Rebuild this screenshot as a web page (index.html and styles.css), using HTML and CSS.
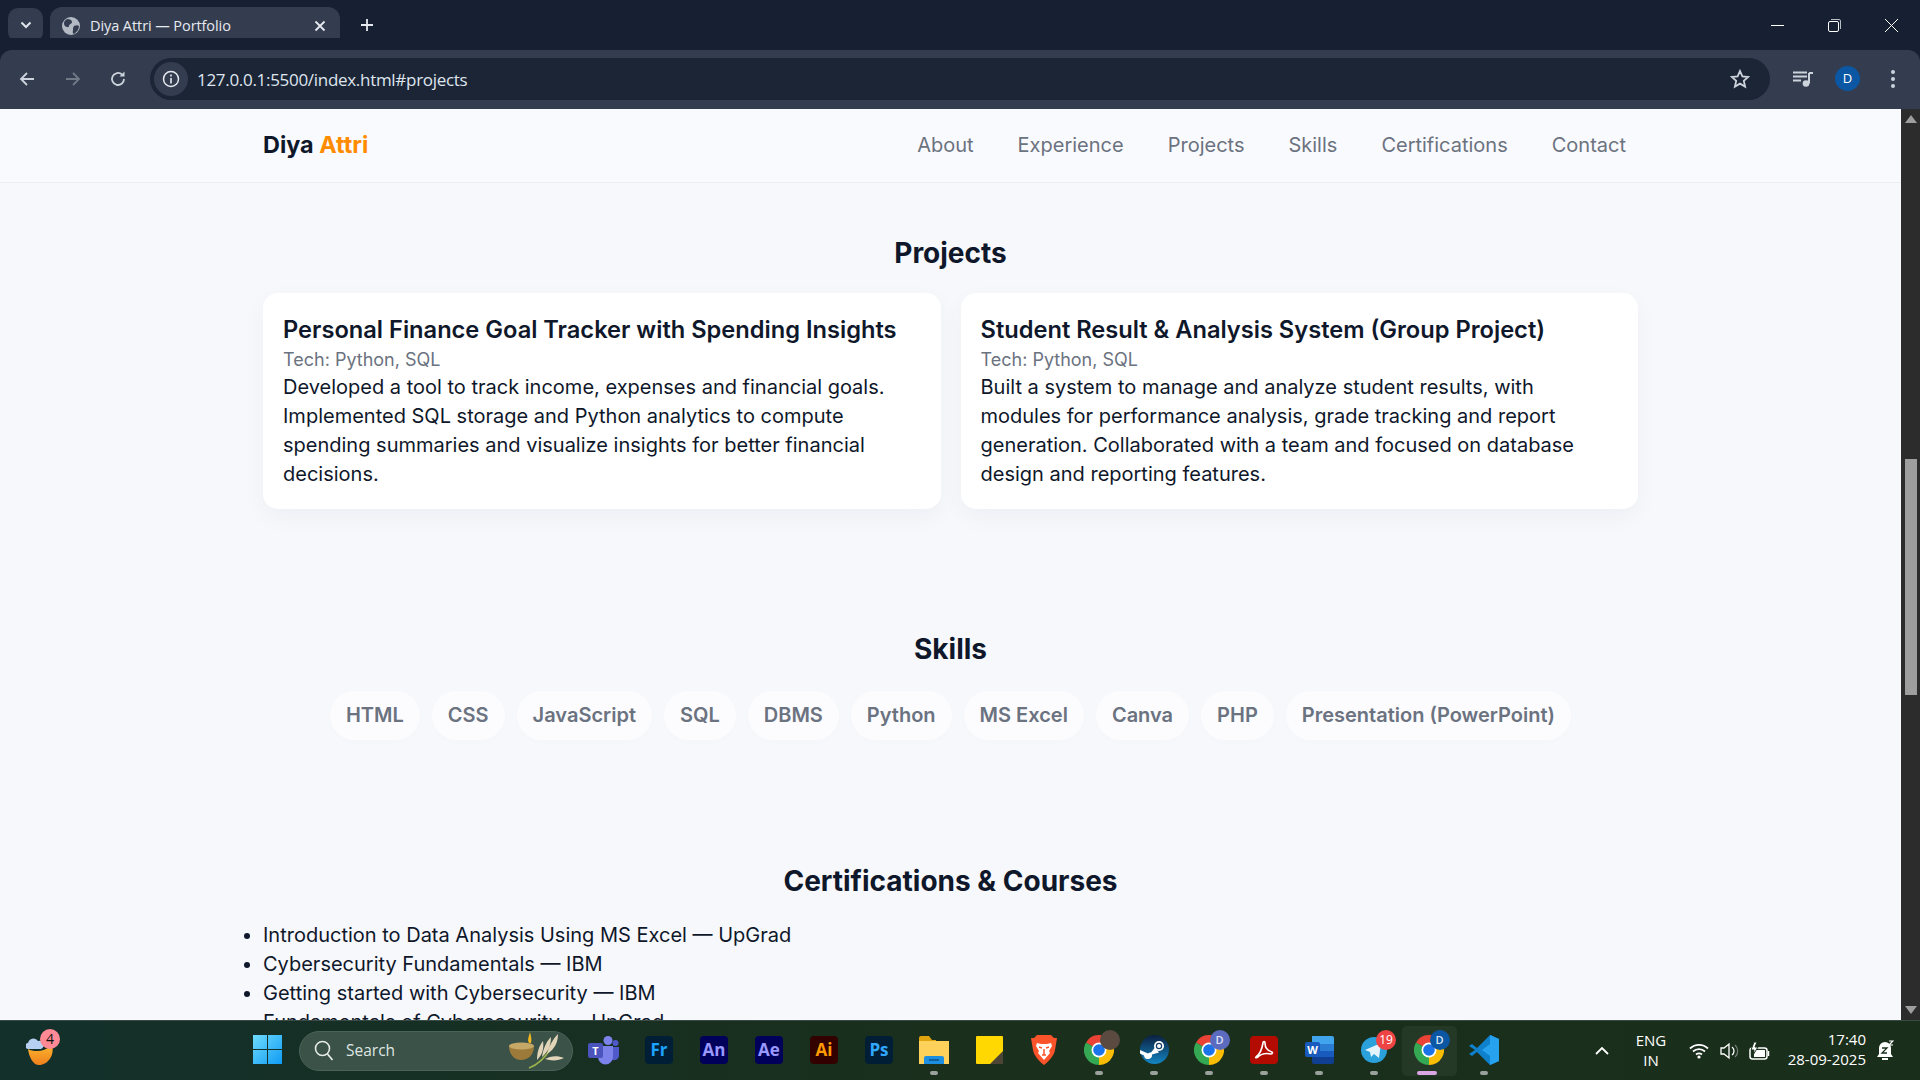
FILE: index.html
```html
<!DOCTYPE html>
<html lang="en">
<head>
    <meta charset="UTF-8">
    <meta name="viewport" content="width=device-width, initial-scale=1.0">
    <title>Diya Attri — Portfolio</title>
    <link rel="stylesheet" href="styles.css">
</head>
<body>
    <div class="tabbar">
        <div class="tab-search">
            <svg width="12" height="8" viewBox="0 0 12 8"><path d="M1.5 1.5 6 6l4.5-4.5" fill="none" stroke="#dfe3ea" stroke-width="2"/></svg>
        </div>
        <div class="tab">
            <svg class="favicon" width="18" height="18" viewBox="0 0 18 18"><circle cx="9" cy="9" r="9" fill="#b4bac4"/><path d="M5 2c3 0 5 1 5 3S7 7 7 9s-3 1-4 0-1-2-1-3 1-3 3-4zM12 9c2-1 4-1 5 0 0 3-2 6-5 8-2-1-1-3-1-4s0-3 1-4z" fill="#343d4f"/></svg>
            <span class="tab-title">Diya Attri — Portfolio</span>
            <svg class="tab-close" width="12" height="12" viewBox="0 0 12 12"><path d="M1.5 1.5l9 9M10.5 1.5l-9 9" stroke="#e6e9ef" stroke-width="1.8"/></svg>
        </div>
        <svg class="new-tab" width="14" height="14" viewBox="0 0 14 14"><path d="M7 1v12M1 7h12" stroke="#e6e9ef" stroke-width="1.8"/></svg>
        <div class="win-controls">
            <svg width="13" height="13" viewBox="0 0 13 13"><path d="M0 6.5h13" stroke="#fff"/></svg>
            <svg width="13" height="13" viewBox="0 0 13 13"><rect x=".5" y="2.5" width="10" height="10" rx="1.5" fill="none" stroke="#fff"/><path d="M3 .5h8a1.500 1.500 0 0 1 1.500 1.500v8" fill="none" stroke="#b9bdc6"/></svg>
            <svg width="13" height="13" viewBox="0 0 13 13"><path d="M0 0l13 13M13 0 0 13" stroke="#fff"/></svg>
        </div>
    </div>

    <div class="toolbar">
        <svg class="tool-btn" width="18" height="18" viewBox="0 0 18 18"><path d="M16 9H3M9 3 3 9l6 6" fill="none" stroke="#cdd3dc" stroke-width="1.800"/></svg>
        <svg class="tool-btn" width="18" height="18" viewBox="0 0 18 18"><path d="M2 9h13M9 3l6 6-6 6" fill="none" stroke="#717987" stroke-width="1.800"/></svg>
        <svg class="tool-btn" width="18" height="18" viewBox="0 0 18 18"><path d="M15 9a6 6 0 1 1-2-4.500" fill="none" stroke="#cdd3dc" stroke-width="1.800"/><path d="M15.500 1.500v5h-5z" fill="#cdd3dc"/></svg>
        <div class="address">
            <span class="site-info">
                <svg width="18" height="18" viewBox="0 0 18 18"><circle cx="9" cy="9" r="7.500" fill="none" stroke="#e6e9ef" stroke-width="1.500"/><path d="M9 8v5.500M9 4.500v2" stroke="#e6e9ef" stroke-width="1.600"/></svg>
            </span>
            <span class="url">127.0.0.1:5500/index.html#projects</span>
            <svg class="star" width="20" height="20" viewBox="0 0 20 20"><path d="M10 2l2.400 5.400 5.800.6-4.400 3.900 1.300 5.700L10 14.600l-5.100 3 1.300-5.700L1.800 8l5.800-.6z" fill="none" stroke="#cdd3dc" stroke-width="1.800"/></svg>
        </div>
        <svg class="media" width="21" height="16" viewBox="0 0 21 16"><path d="M0 1.500h14M0 5.500h14M0 9.500h8" stroke="#cdd3dc" stroke-width="1.800"/><path d="M16 2v10.500" stroke="#cdd3dc" stroke-width="2"/><path d="M16 1h4v2h-4z" fill="#cdd3dc"/><circle cx="13" cy="12.500" r="3.300" fill="#cdd3dc"/></svg>
        <span class="avatar">D</span>
        <svg class="kebab" width="4" height="18" viewBox="0 0 4 18"><circle cx="2" cy="2" r="2" fill="#cdd3dc"/><circle cx="2" cy="9" r="2" fill="#cdd3dc"/><circle cx="2" cy="16" r="2" fill="#cdd3dc"/></svg>
    </div>

    <div class="viewport">
        <div class="page">
            <nav class="nav">
                <div class="logo">Diya <span class="accent">Attri</span></div>
                <div class="nav-links">
                    <a href="#about">About</a>
                    <a href="#experience">Experience</a>
                    <a href="#projects">Projects</a>
                    <a href="#skills">Skills</a>
                    <a href="#certs">Certifications</a>
                    <a href="#contact">Contact</a>
                </div>
            </nav>

            <section class="section projects" id="projects">
                <h2>Projects</h2>
                <div class="cards">
                    <article class="card">
                        <h3>Personal Finance Goal Tracker with Spending Insights</h3>
                        <div class="tech">Tech: Python, SQL</div>
                        <p>Developed a tool to track income, expenses and financial goals. Implemented SQL storage and Python analytics to compute spending summaries and visualize insights for better financial decisions.</p>
                    </article>
                    <article class="card">
                        <h3>Student Result &amp; Analysis System (Group Project)</h3>
                        <div class="tech">Tech: Python, SQL</div>
                        <p>Built a system to manage and analyze student results, with modules for performance analysis, grade tracking and report generation. Collaborated with a team and focused on database design and reporting features.</p>
                    </article>
                </div>
            </section>

            <section class="section skills" id="skills">
                <h2>Skills</h2>
                <div class="pills">
                    <span class="pill">HTML</span>
                    <span class="pill">CSS</span>
                    <span class="pill">JavaScript</span>
                    <span class="pill">SQL</span>
                    <span class="pill">DBMS</span>
                    <span class="pill">Python</span>
                    <span class="pill">MS Excel</span>
                    <span class="pill">Canva</span>
                    <span class="pill">PHP</span>
                    <span class="pill">Presentation (PowerPoint)</span>
                </div>
            </section>

            <section class="section certs" id="certs">
                <h2>Certifications &amp; Courses</h2>
                <ul>
                    <li>Introduction to Data Analysis Using MS Excel — UpGrad</li>
                    <li>Cybersecurity Fundamentals — IBM</li>
                    <li>Getting started with Cybersecurity — IBM</li>
                    <li>Fundamentals of Cybersecurity — UpGrad</li>
                </ul>
            </section>
        </div>
        <div class="scrollbar">
            <span class="arrow-up"></span>
            <div class="track"><div class="thumb"></div></div>
            <span class="arrow-down"></span>
        </div>
    </div>

    <div class="taskbar">
        <div class="weather">
            <svg width="29" height="28" viewBox="0 0 29 28"><defs><linearGradient id="moon" x1="0" y1="0" x2="0" y2="1"><stop offset="0" stop-color="#fbb62e"/><stop offset="1" stop-color="#ee7f1c"/></linearGradient></defs><path d="M2 12c7 4 18 2 24-4 3 10-4 20-13 20C7 28 3 20 2 12z" fill="url(#moon)"/><path d="M3 12a3 3 0 0 1-1-6 5.500 5.500 0 0 1 10-2 4 4 0 0 1 3 8z" fill="#b5d0f0"/></svg>
            <span class="weather-badge">4</span>
        </div>

        <div class="center-icons">
            <div class="slot">
                <svg width="29" height="29" viewBox="0 0 29 29"><defs><linearGradient id="winblue" x1="0" y1="0" x2="1" y2="1"><stop offset="0" stop-color="#6fdcfb"/><stop offset="1" stop-color="#0f9bf5"/></linearGradient></defs><path d="M0 0h14v14H0zM15 0h14v14H15zM0 15h14v14H0zM15 15h14v14H15z" fill="url(#winblue)"/></svg>
            </div>
            <div class="search">
                <svg width="20" height="22" viewBox="0 0 20 22"><circle cx="8.500" cy="8.500" r="7" fill="none" stroke="#e6ebe8" stroke-width="1.600"/><path d="M13.500 14l5 6" stroke="#e6ebe8" stroke-width="1.800"/></svg>
                <span class="search-label">Search</span>
                <svg class="diya" width="58" height="38" viewBox="0 0 58 38"><path d="M22 36c8-3 16-10 22-20" fill="none" stroke="#9db34a" stroke-width="1.500"/><path d="M30 28c0-8 2-14 6-19 1 7 0 13-6 19zM35 25c1-8 4-15 9-20 0 7-2 14-9 20zM40 22c2-8 6-15 11-20 0 8-3 15-11 20zM38 27c5-3 12-4 19-1-6 3-13 3-19 1z" fill="#e2d4b8"/><path d="M2 14c6-3 20-3 25 0 0 9-6 14-13 14S2 22 2 14z" fill="#9c7b3a"/><ellipse cx="14.500" cy="14" rx="12.500" ry="3.500" fill="#c5a868"/><path d="M22 11c-2-3 0-7 1-11 1 4 2 8 1 11z" fill="#f4b81c"/></svg>
            </div>
            <div class="slot">
                <svg width="32" height="30" viewBox="0 0 32 30"><circle cx="20" cy="5.500" r="4.500" fill="#7b83eb"/><circle cx="27.500" cy="8" r="3" fill="#5059c9"/><path d="M22 12h9v9a5 5 0 0 1-9 2z" fill="#5059c9"/><path d="M10 11h15v11a7 7 0 0 1-15 0z" fill="#7b83eb"/><rect y="8" width="15" height="15" rx="2" fill="#4b53bc"/><text x="7.500" y="20" class="tile-small">T</text></svg>
            </div>
            <div class="slot"><span class="tile tile-fr">Fr</span></div>
            <div class="slot"><span class="tile tile-an">An</span></div>
            <div class="slot"><span class="tile tile-ae">Ae</span></div>
            <div class="slot"><span class="tile tile-ai">Ai</span></div>
            <div class="slot"><span class="tile tile-ps">Ps</span></div>
            <div class="slot running">
                <svg width="30" height="28" viewBox="0 0 30 28"><path d="M0 2a2 2 0 0 1 2-2h8l3 4h4v4H0z" fill="#e0a50e"/><path d="M0 5h30v23H0z" fill="#fdd15a"/><path d="M5 22a2 2 0 0 1 2-2h16a2 2 0 0 1 2 2v6H5z" fill="#1d8fe0"/><path d="M10 24h10" stroke="#0d4f8a" stroke-width="1.500"/></svg>
            </div>
            <div class="slot">
                <svg width="27" height="28" viewBox="0 0 27 28"><path d="M1 0h25a1 1 0 0 1 1 1v27H1a1 1 0 0 1-1-1V1a1 1 0 0 1 1-1z" fill="#fed800"/><path d="M27 15v13H14z" fill="#4c4536"/></svg>
            </div>
            <div class="slot">
                <svg width="26" height="30" viewBox="0 0 26 30"><path d="M6 0h14l3 3h3l-2 12c-1 6-7 12-11 15C9 27 3 21 2 15L0 3h3z" fill="#fb542b"/><path d="M6 8l4 1h6l4-1 1 3-3 5 1 2-6 7-6-7 1-2-3-5z" fill="#fff"/><path d="M8 12l3 1M18 12l-3 1M11 20h4M13 14v6" stroke="#fb542b" stroke-width="1.500"/></svg>
            </div>
            <div class="slot running">
                <svg class="chrome" width="30" height="30" viewBox="0 0 30 30"><use href="#chrome-art"/></svg>
                <span class="profile-badge badge-photo"></span>
            </div>
            <div class="slot running">
                <svg width="29" height="29" viewBox="0 0 29 29"><defs><linearGradient id="steamblue" x1="0" y1="0" x2="0" y2="1"><stop offset="0" stop-color="#0c1f3f"/><stop offset="1" stop-color="#1386c2"/></linearGradient></defs><circle cx="14.500" cy="14.500" r="14.500" fill="url(#steamblue)"/><circle cx="19" cy="11" r="5" fill="#fff"/><circle cx="19" cy="11" r="3.200" fill="#123a66"/><circle cx="19" cy="11" r="2" fill="#fff"/><path d="M0 15l8 3.500a4 4 0 0 1 3-1l4-5 4 5-7 2a4 4 0 0 1-8 1l-4-2z" fill="#fff"/></svg>
            </div>
            <div class="slot running">
                <svg class="chrome" width="30" height="30" viewBox="0 0 30 30"><use href="#chrome-art"/></svg>
                <span class="profile-badge badge-purple">D</span>
            </div>
            <div class="slot running">
                <span class="tile tile-pdf"><svg width="20" height="20" viewBox="0 0 20 20"><path d="M2 17c3-2 6-8 7-14 0-2 2-2 2 0 0 5 3 8 7 9 1 1 0 2-1 2-5-1-10 0-13 3-1 1-3 1-2 0z" fill="none" stroke="#fff" stroke-width="1.600"/></svg></span>
            </div>
            <div class="slot running">
                <svg width="29" height="28" viewBox="0 0 29 28"><path d="M7 0h20a2 2 0 0 1 2 2v6H7z" fill="#41a5ee"/><path d="M7 8h22v7H7z" fill="#2b7cd3"/><path d="M7 15h22v6H7z" fill="#185abd"/><path d="M7 21h22v5a2 2 0 0 1-2 2H9a2 2 0 0 1-2-2z" fill="#103f91"/><rect y="6" width="15" height="15" rx="2" fill="#185abd"/><text x="7.500" y="18" class="tile-small">W</text></svg>
            </div>
            <div class="slot running">
                <svg width="26" height="26" viewBox="0 0 26 26"><circle cx="13" cy="13" r="13" fill="#2aa1da"/><path d="M4 13l16-7-2 15-5-4-3 3-1-5z" fill="#e3f3fb"/></svg>
                <span class="count-badge">19</span>
            </div>
            <div class="slot running active">
                <svg class="chrome" width="30" height="30" viewBox="0 0 30 30"><use href="#chrome-art"/></svg>
                <span class="profile-badge badge-blue">D</span>
            </div>
            <div class="slot running">
                <svg width="30" height="30" viewBox="0 0 30 30"><path d="M21 0l9 4v22l-9 4L8 17l-5 4-3-2 6-4-6-4 3-2 5 4z" fill="#0e80cc"/><path d="M21 0l9 4v22l-9 4V21l-8-6 8-6z" fill="#27a2ef"/></svg>
            </div>
        </div>

        <div class="tray">
            <svg class="tray-up" width="14" height="9" viewBox="0 0 14 9"><path d="M1 8l6-6 6 6" fill="none" stroke="#fff" stroke-width="1.800"/></svg>
            <div class="lang">ENG<br>IN</div>
            <svg class="tray-icon" width="20" height="16" viewBox="0 0 20 16"><path d="M1 5.500a13 13 0 0 1 18 0M4 8.500a9 9 0 0 1 12 0M7 11.500a5 5 0 0 1 6 0" fill="none" stroke="#fff" stroke-width="1.800"/><circle cx="10" cy="14" r="1.600" fill="#fff"/></svg>
            <svg class="tray-icon" width="20" height="18" viewBox="0 0 20 18"><path d="M1 6h3l5-4v14l-5-4H1z" fill="none" stroke="#fff" stroke-width="1.300"/><path d="M12 5a5 5 0 0 1 0 8" fill="none" stroke="#fff" stroke-width="1.300"/><path d="M15 3a8 8 0 0 1 0 12" fill="none" stroke="#77807a" stroke-width="1.200"/></svg>
            <svg class="tray-icon battery" width="21" height="18" viewBox="0 0 21 18"><rect x="1" y="6" width="17" height="11" rx="2.500" fill="none" stroke="#fff" stroke-width="1.500"/><rect x="5" y="8" width="11" height="7" fill="#fff"/><path d="M19.500 9v5" stroke="#fff" stroke-width="1.500"/><path d="M5 0 2 8h3l-1 5 5-8H6l2-5z" fill="#fff" stroke="#1a2f1c"/></svg>
            <div class="clock">17:40<br>28-09-2025</div>
            <svg class="bell" width="18" height="22" viewBox="0 0 18 22"><path d="M9 2a6 6 0 0 0-6 6v6l-2 3h16l-2-3V8a6 6 0 0 0-6-6z" fill="#fff"/><path d="M6 19h6" stroke="#fff" stroke-width="2"/><path d="M6 8h5l-5 5h5" fill="none" stroke="#1a2f1c" stroke-width="1.300"/><path d="M13 1h4l-4 4h4" fill="none" stroke="#fff" stroke-width="1.200"/></svg>
        </div>
    </div>

    <svg class="sprite" width="0" height="0">
        <symbol id="chrome-art" viewBox="0 0 30 30">
            <path d="M15 15 2 7.500A15 15 0 0 1 28 7.500z" fill="#ea4335"/>
            <path d="M15 15 15 30A15 15 0 0 1 2 7.500z" fill="#34a853"/>
            <path d="M15 15 28 7.500A15 15 0 0 1 15 30z" fill="#fbbc04"/>
            <circle cx="15" cy="15" r="7.500" fill="#fff"/>
            <circle cx="15" cy="15" r="5.800" fill="#1a73e8"/>
        </symbol>
    </svg>
</body>
</html>
```

FILE: styles.css
```css
* {
    margin: 0;
    padding: 0;
    box-sizing: border-box;
}

html, body {
    height: 100%;
    overflow: hidden;
}

body {
    display: flex;
    flex-direction: column;
    font-family: 'Inter', sans-serif;
    font-size: 20px;
    line-height: 29px;
    color: #0f172a;
    background: #f7f8fc;
}

.sprite {
    position: absolute;
}

/* browser chrome */
.tabbar {
    height: 50px;
    flex: none;
    display: flex;
    align-items: flex-end;
    background: #172033;
    padding-left: 8px;
}

.tab-search {
    width: 35px;
    height: 34px;
    margin-bottom: 8px;
    background: #343d4f;
    border-radius: 10px;
    display: flex;
    align-items: center;
    justify-content: center;
}

.tab {
    width: 290px;
    height: 43px;
    margin-left: 7px;
    padding: 0 14px 6px 12px;
    display: flex;
    align-items: center;
    background: #343d4f;
    border-radius: 12px 12px 0 0;
}

.tab-title {
    flex: 1;
    margin-left: 10px;
    font-family: 'Open Sans', sans-serif;
    font-size: 14.5px;
    letter-spacing: -0.08px;
    color: #e6e9ef;
}

.new-tab {
    margin: 0 0 18px 20px;
}

.win-controls {
    margin-left: auto;
    height: 50px;
    display: flex;
    align-items: center;
    gap: 44px;
    padding-right: 22px;
}

.toolbar {
    height: 59px;
    flex: none;
    display: flex;
    align-items: center;
    padding: 0 0 2px 18px;
    background: #343d4f;
    border-radius: 12px 12px 0 0;
    box-shadow: 0 -12px 0 #172033;
}

.tool-btn {
    margin-right: 27.500px;
}

.tool-btn:nth-child(3) {
    margin-right: 23px;
}

.address {
    width: 1620px;
    height: 42px;
    padding: 0 20px 0 4px;
    display: flex;
    align-items: center;
    background: #1c2536;
    border-radius: 21px;
}

.site-info {
    width: 34px;
    height: 34px;
    border-radius: 50%;
    background: #343d4f;
    display: flex;
    align-items: center;
    justify-content: center;
}

.url {
    flex: 1;
    margin: 2px 0 0 9px;
    font-family: 'Open Sans', sans-serif;
    font-size: 17px;
    letter-spacing: -0.3px;
    color: #dfe5ee;
}

.media {
    margin-left: 23px;
}

.avatar {
    width: 25px;
    height: 25px;
    margin-left: 21px;
    border-radius: 50%;
    background: #0b57a4;
    color: #fff;
    font-family: 'Open Sans', sans-serif;
    font-size: 13px;
    line-height: 25px;
    text-align: center;
}

.kebab {
    margin-left: 31px;
}

/* page area */
.viewport {
    flex: 1;
    min-height: 0;
    display: flex;
    overflow: hidden;
}

.page {
    flex: 1;
    min-width: 0;
}

.scrollbar {
    width: 19px;
    flex: none;
    display: flex;
    flex-direction: column;
    background: #2c2c2c;
}

.arrow-up, .arrow-down {
    height: 8px;
    flex: none;
    margin: 6px auto 0;
    width: 0;
    border: 6.5px solid transparent;
    border-top-width: 0;
    border-bottom-width: 8px;
    border-bottom-color: #9e9e9e;
}

.arrow-down {
    border-bottom-width: 0;
    border-top-width: 8px;
    border-top-color: #9e9e9e;
    margin: 0 auto 6px;
}

.track {
    flex: 1;
    padding: 336px 3px 0 4px;
}

.thumb {
    height: 236px;
    background: #9e9e9e;
}

.nav {
    height: 74px;
    padding: 0 275px 0 263px;
    display: flex;
    align-items: center;
    justify-content: space-between;
    background: #f9fafd;
    border-bottom: 1px solid #eceef2;
}

.logo {
    font-size: 23.4px;
    font-weight: 700;
    margin-top: -2px;
}

.accent {
    color: #ff8c00;
}

.nav-links {
    display: flex;
    gap: 44px;
}

.nav-links a {
    color: #6b7280;
    text-decoration: none;
}

.section {
    width: 1375px;
    margin-left: 263px;
}

.section h2 {
    font-size: 28px;
    line-height: 36px;
    font-weight: 700;
    text-align: center;
}

.projects {
    padding-top: 52px;
}

.cards {
    margin-top: 22px;
    display: grid;
    grid-template-columns: 1fr 1fr;
    gap: 20px;
}

.card {
    padding: 20px;
    background: #fff;
    border-radius: 15px;
    box-shadow: 0 8px 24px rgba(15, 23, 42, 0.04);
}

.card h3 {
    font-size: 23.650px;
    line-height: 33px;
    font-weight: 600;
}

.tech {
    font-size: 18px;
    line-height: 27px;
    color: #6b7280;
}

.skills {
    padding-top: 122px;
}

.pills {
    margin-top: 24px;
    display: flex;
    justify-content: center;
    gap: 12px;
}

.pill {
    height: 49px;
    padding: 0 16px;
    display: flex;
    align-items: center;
    background: #fcfcfe;
    border-radius: 25px;
    box-shadow: 0 2px 8px rgba(15, 23, 42, 0.01);
    font-weight: 600;
    color: #6b7280;
}

.certs {
    padding-top: 123px;
}

.certs ul {
    margin-top: 22px;
}

/* windows taskbar */
.taskbar {
    height: 60px;
    flex: none;
    display: flex;
    align-items: center;
    background: linear-gradient(90deg, #13302b, #1a2f1c 50%, #1a2e1c);
    border-top: 1px solid #3a4a44;
    color: #fff;
}

.weather {
    position: relative;
    width: 240px;
    flex: none;
    padding-left: 26px;
    display: flex;
}

.weather-badge {
    position: absolute;
    left: 40px;
    top: -8px;
    width: 20px;
    height: 20px;
    border-radius: 50%;
    background: #ff8a96;
    color: #111;
    font-family: 'Open Sans', sans-serif;
    font-size: 14px;
    line-height: 20px;
    text-align: center;
}

.center-icons {
    display: flex;
    align-items: center;
}

.slot {
    position: relative;
    width: 55px;
    height: 50px;
    padding-bottom: 2px;
    flex: none;
    display: flex;
    align-items: center;
    justify-content: center;
}

.running::after {
    content: "";
    position: absolute;
    bottom: 1px;
    left: 23.500px;
    width: 8px;
    height: 4px;
    border-radius: 2px;
    background: #9aa09b;
}

.active {
    background: rgba(255, 255, 255, 0.05);
    border-radius: 5px;
}

.active::after {
    left: 15px;
    width: 20px;
    background: #d9a5e2;
}

.search {
    width: 274px;
    height: 40px;
    margin: 0 3.500px 0 4px;
    padding: 0 7px 0 14px;
    flex: none;
    display: flex;
    align-items: center;
    background: #3a5248;
    border: 1px solid #4a6258;
    border-radius: 20px;
}

.search-label {
    flex: 1;
    margin-left: 12px;
    font-family: 'Open Sans', sans-serif;
    font-size: 15.500px;
    color: #dfe6e2;
}

.tile {
    width: 28px;
    height: 28px;
    display: flex;
    align-items: center;
    justify-content: center;
    border-radius: 4px;
    font-family: 'Open Sans', sans-serif;
    font-size: 17px;
    font-weight: 700;
}

.tile-fr { background: #001e36; color: #1aa3ff; }
.tile-an { background: #00005b; color: #9999ff; }
.tile-ae { background: #00005b; color: #9999ff; }
.tile-ai { background: #330000; color: #ff9a00; }
.tile-ps { background: #001e36; color: #31a8ff; }
.tile-pdf { background: #b30b00; }

.tile-small {
    font-family: 'Open Sans', sans-serif;
    font-size: 11px;
    font-weight: 700;
    fill: #fff;
    text-anchor: middle;
}

.profile-badge {
    position: absolute;
    left: 28px;
    top: 4px;
    width: 20px;
    height: 20px;
    border-radius: 50%;
    font-family: 'Open Sans', sans-serif;
    font-size: 11px;
    line-height: 20px;
    font-weight: 600;
    text-align: center;
}

.badge-photo { background: #5a4a40; }
.badge-purple { background: #5c6bc0; color: #dfe3f5; }
.badge-blue { background: #0b57a4; color: #dbe7f5; }

.count-badge {
    position: absolute;
    left: 29.500px;
    top: 4px;
    width: 20px;
    height: 20px;
    border-radius: 50%;
    background: #ef4444;
    font-family: 'Open Sans', sans-serif;
    font-size: 12px;
    line-height: 20px;
    text-align: center;
}

.tray {
    margin-left: auto;
    padding-right: 26px;
    display: flex;
    align-items: center;
    font-family: 'Open Sans', sans-serif;
    font-size: 15px;
    line-height: 20px;
}

.lang {
    margin: 0 0 2px 27px;
    text-align: center;
}

.tray-icon {
    margin-left: 10.500px;
}

.lang + .tray-icon {
    margin-left: 23px;
}

.tray .battery {
    margin-left: 9px;
}

.clock {
    margin: 0 0 4px 18px;
    text-align: right;
}

.bell {
    margin-left: 10px;
}
```
